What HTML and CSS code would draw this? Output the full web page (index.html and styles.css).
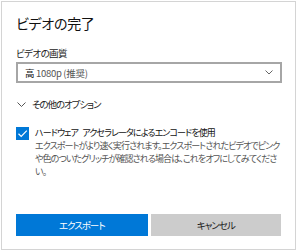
FILE: index.html
```html
<!DOCTYPE html>
<html lang="ja">
<head>
<meta charset="utf-8">
<link rel="stylesheet" href="styles.css">
</head>
<body>
<div class="dialog">
  <h1 class="title">ビデオの完了</h1>
  <div class="label">ビデオの画質</div>
  <div class="select">
    <span class="select-text"><span class="strong">高</span> 1080p (推奨)</span>
    <svg class="chev" width="8" height="5" viewBox="0 0 8 5"><path d="M0.5 0.5 L4 4 L7.5 0.5" fill="none" stroke="#666" stroke-width="1"/></svg>
  </div>
  <div class="more">
    <svg class="chev2" width="9" height="5" viewBox="0 0 9 5"><path d="M0.5 0.5 L4.5 4.5 L8.5 0.5" fill="none" stroke="#555" stroke-width="1"/></svg>
    <span>その他のオプション</span>
  </div>
  <div class="check-row">
    <div class="checkbox">
      <svg width="13" height="13" viewBox="0 0 13 13"><path d="M2.5 6.8 L5.2 9.4 L10.8 3.6" fill="none" stroke="#fff" stroke-width="1.2"/></svg>
    </div>
    <div class="check-text">
      <div class="check-title">ハードウェア アクセラレータによるエンコードを使用</div>
      <div class="check-desc">エクスポートがより速く実行されます。エクスポートされたビデオでピンク<br>や色のついたグリッチが確認される場合は、これをオフにしてみてくださ<br>い。</div>
    </div>
  </div>
  <div class="buttons">
    <button class="btn primary">エクスポート</button>
    <button class="btn secondary">キャンセル</button>
  </div>
</div>
</body>
</html>
```
FILE: styles.css
```css
html, body {
  margin: 0;
  padding: 0;
  background: #ffffff;
}
body {
  font-family: "Noto Sans CJK JP", "Noto Sans", sans-serif;
  font-feature-settings: "palt";
  color: #1a1a1a;
}
.dialog {
  margin: 1px 1px 0 1px;
  width: 295px;
  height: 249px;
  box-sizing: border-box;
  border: 1px solid #d4d4d4;
  padding: 11px 14px 0 14px;
  display: flex;
  flex-direction: column;
}
.title {
  margin: 0;
  font-size: 14px;
  font-weight: 400;
  line-height: 20px;
  color: #111;
  letter-spacing: -0.3px;
}
.label {
  margin-top: 13px;
  font-size: 9.5px;
  line-height: 14px;
  color: #222;
  letter-spacing: -0.6px;
}
.select {
  margin-top: 2px;
  width: 266px;
  height: 21px;
  box-sizing: border-box;
  border: 2px solid #a6a6a6;
  display: flex;
  align-items: center;
  justify-content: space-between;
  padding: 0 7px 0 7px;
}
.select-text {
  font-size: 9.5px;
  color: #555;
  line-height: 14px;
  letter-spacing: -0.3px;
}
.select-text .strong {
  color: #111;
}
.more {
  margin-top: 14px;
  display: flex;
  align-items: center;
  gap: 6px;
  font-size: 9.5px;
  line-height: 14px;
  color: #222;
  letter-spacing: -1.1px;
}
.chev2 {
  margin-left: 1px;
}
.check-row {
  margin-top: 16px;
  display: flex;
  gap: 6px;
  align-items: flex-start;
}
.checkbox {
  flex: 0 0 13px;
  width: 13px;
  height: 13px;
  background: #0078d7;
  display: flex;
}
.check-text {
  width: 256px;
  font-size: 9px;
  line-height: 13px;
  margin-top: -1px;
  letter-spacing: -0.9px;
  white-space: nowrap;
}
.check-title {
  color: #111;
  word-spacing: 3px;
}
.check-desc {
  color: #555;
}
.buttons {
  margin-top: auto;
  margin-bottom: 13px;
  display: flex;
  gap: 3px;
}
.btn {
  height: 22px;
  border: none;
  font-family: inherit;
  font-feature-settings: "palt";
  font-size: 9.5px;
  letter-spacing: -1px;
  padding: 0;
  width: 132px;
}
.primary {
  background: #0078d7;
  color: #fff;
}
.secondary {
  width: 131px;
  background: #cccccc;
  color: #1a1a1a;
}
```
